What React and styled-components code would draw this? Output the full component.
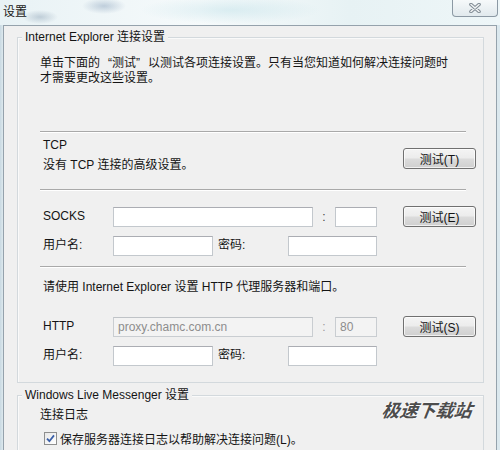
import React from 'react';
import styled, { createGlobalStyle } from 'styled-components';

const Global = createGlobalStyle`
  html, body { margin: 0; padding: 0; background: #e6eff3; }
  body {
    font-family: "Liberation Sans", "Noto Sans CJK SC", sans-serif;
    font-size: 12px;
    color: #141414;
  }
`;

const Window = styled.div`
  width: 500px;
  height: 450px;
  overflow: hidden;
  position: relative;
  display: flex;
  flex-direction: column;
  background: linear-gradient(90deg, #c9d9e2 0px, #dde9ee 3px, #e9f2f5 50%, #dbe8ee 100%);
`;

const TitleBar = styled.div`
  height: 25px;
  flex: none;
  display: flex;
  justify-content: space-between;
  align-items: flex-start;
  background:
    radial-gradient(ellipse 18px 7px at 40px 17px, rgba(110, 135, 160, 0.35), transparent),
    radial-gradient(ellipse 22px 8px at 104px 6px, rgba(100, 130, 165, 0.35), transparent),
    radial-gradient(ellipse 90px 14px at 230px 10px, rgba(170, 215, 225, 0.35), transparent),
    linear-gradient(90deg, #e8f2f5, #f6fafb 40%, #e7f2f4 70%, #eef6f8);
`;

const Title = styled.span`
  padding: 5px 0 0 3px;
  font-size: 12px;
  line-height: 14px;
  color: #202020;
`;

const CloseButton = styled.div`
  width: 44px;
  height: 16px;
  margin-right: 2px;
  border: 1px solid #8c99a4;
  border-top: none;
  border-radius: 0 0 4px 4px;
  background: linear-gradient(#f6f9fa, #e1e9ed);
  display: flex;
  align-items: center;
  justify-content: center;
`;

const Frame = styled.div`
  flex: 1;
  display: flex;
  padding: 0 3px;
`;

const Client = styled.div`
  flex: 1;
  border: 1px solid #95a2ac;
  border-bottom: none;
  background: #f0f0f0;
  padding: 11px 12px 0 13px;
  display: flex;
  flex-direction: column;
`;

const Group = styled.div`
  position: relative;
  border: 1px solid #d3d9dd;
  box-shadow: inset 1px 1px 0 #fafafa;
  margin-top: ${p => p.$mt || 0}px;
  padding: ${p => p.$pad};
  display: flex;
  flex-direction: column;
`;

const Legend = styled.span`
  position: absolute;
  top: -8px;
  left: 4px;
  padding: 0 3px;
  background: #f0f0f0;
  line-height: 15px;
`;

const Text = styled.div`
  line-height: 15px;
  margin-top: ${p => p.$mt || 0}px;
  padding-left: ${p => p.$pl || 0}px;
  white-space: nowrap;
`;

const Description = styled.p`
  margin: 0;
  line-height: 15px;
  white-space: nowrap;
`;

const Quote = styled.span`
  display: inline-block;
  width: 12px;
  text-align: ${p => (p.$open ? 'right' : 'left')};
`;

const Separator = styled.div`
  width: 426px;
  height: 0;
  border-top: 1px solid #a9a9a9;
  border-bottom: 1px solid #ffffff;
  margin-top: ${p => p.$mt}px;
`;

const Section = styled.div`
  display: flex;
  justify-content: space-between;
  align-items: flex-start;
  margin-top: ${p => p.$mt}px;
`;

const Row = styled.div`
  display: flex;
  align-items: center;
  height: 21px;
  padding-left: 3px;
  margin-top: ${p => p.$mt}px;
`;

const Label = styled.span`
  width: ${p => p.$w || 70}px;
  margin-left: ${p => p.$ml || 0}px;
  flex: none;
  line-height: 15px;
`;

const Input = styled.div`
  box-sizing: border-box;
  width: ${p => p.$w}px;
  height: 20px;
  flex: none;
  border: 1px solid ${p => (p.$disabled ? '#c9cdd1' : '#c3c8cd')};
  border-top-color: ${p => (p.$disabled ? '#bfc3c7' : '#abadb3')};
  background: ${p => (p.$disabled ? '#f3f3f3' : '#ffffff')};
  color: #8d8d8d;
  padding-left: 4px;
  line-height: 18px;
  font-size: 12px;
  overflow: hidden;
  white-space: nowrap;
`;

const Colon = styled.span`
  width: 22px;
  flex: none;
  text-align: center;
  color: ${p => (p.$disabled ? '#9a9a9a' : '#444')};
`;

const Button = styled.div`
  box-sizing: border-box;
  width: 73px;
  height: 21px;
  flex: none;
  margin-left: auto;
  margin-top: ${p => p.$mt || 0}px;
  border: 1px solid #707070;
  border-radius: 3px;
  background: linear-gradient(#f4f4f4 0%, #ececec 48%, #dcdcdc 52%, #cfcfcf 100%);
  box-shadow: inset 0 0 0 1px rgba(255, 255, 255, 0.7);
  display: flex;
  align-items: center;
  justify-content: center;
  font-size: 12px;
  color: #141414;
`;

const TcpText = styled.div`
  padding-left: 3px;
  display: flex;
  flex-direction: column;
`;

const CheckRow = styled.div`
  display: flex;
  align-items: center;
  margin-top: 7px;
  padding-left: 4px;
  gap: 3px;
`;

const CheckBox = styled.span`
  box-sizing: border-box;
  width: 13px;
  height: 13px;
  border: 1px solid #8e8f8f;
  background: linear-gradient(135deg, #e8e8e8, #ffffff);
  display: flex;
  align-items: center;
  justify-content: center;
`;

const Watermark = styled.div`
  position: absolute;
  left: 382px;
  top: 396px;
  font-family: "Noto Sans CJK SC", sans-serif;
  font-size: 18px;
  font-weight: 700;
  font-style: italic;
  color: #4d4d4d;
  text-shadow: 0 0 2px #ffffff, 0 0 2px #ffffff;
  transform: skewX(-8deg);
`;

export default function App() {
  return (
    <>
      <Global />
      <Window>
        <TitleBar>
          <Title>设置</Title>
          <CloseButton>
            <svg width="12" height="10" viewBox="0 0 12 10">
              <path d="M2 1.5 L10 8.5 M10 1.5 L2 8.5" stroke="#7f8a93" strokeWidth="3.6" strokeLinecap="round" fill="none" />
              <path d="M2 1.5 L10 8.5 M10 1.5 L2 8.5" stroke="#f2f4f5" strokeWidth="1.6" strokeLinecap="round" fill="none" />
            </svg>
          </CloseButton>
        </TitleBar>
        <Frame>
          <Client>
            <Group $pad="18px 7px 16px 22px">
              <Legend>Internet Explorer 连接设置</Legend>
              <Description>
                单击下面的<Quote $open>“</Quote>测试<Quote>”</Quote>以测试各项连接设置。只有当您知道如何解决连接问题时
                <br />
                才需要更改这些设置。
              </Description>

              <Separator $mt={45} />
              <Section $mt={5}>
                <TcpText>
                  <Text>TCP</Text>
                  <Text $mt={5}>没有 TCP 连接的高级设置。</Text>
                </TcpText>
                <Button $mt={10}>测试(T)</Button>
              </Section>

              <Separator $mt={16} />
              <Row $mt={15}>
                <Label>SOCKS</Label>
                <Input $w={200} />
                <Colon>:</Colon>
                <Input $w={42} />
                <Button>测试(E)</Button>
              </Row>
              <Row $mt={8}>
                <Label>用户名:</Label>
                <Input $w={100} />
                <Label $ml={5}>密码:</Label>
                <Input $w={89} />
              </Row>

              <Separator $mt={10} />
              <Text $mt={12} $pl={3}>请使用 Internet Explorer 设置 HTTP 代理服务器和端口。</Text>
              <Row $mt={21}>
                <Label>HTTP</Label>
                <Input $w={200} $disabled>proxy.chamc.com.cn</Input>
                <Colon $disabled>:</Colon>
                <Input $w={42} $disabled>80</Input>
                <Button>测试(S)</Button>
              </Row>
              <Row $mt={8}>
                <Label>用户名:</Label>
                <Input $w={100} />
                <Label $ml={5}>密码:</Label>
                <Input $w={89} />
              </Row>
            </Group>

            <Group $mt={12} $pad="12px 7px 20px 22px">
              <Legend>Windows Live Messenger 设置</Legend>
              <Text>连接日志</Text>
              <CheckRow>
                <CheckBox>
                  <svg width="9" height="9" viewBox="0 0 9 9">
                    <path d="M1 4.6 L3.4 7.2 L8 1.4" stroke="#3a5fa8" strokeWidth="1.8" fill="none" />
                  </svg>
                </CheckBox>
                <span>保存服务器连接日志以帮助解决连接问题(L)。</span>
              </CheckRow>
            </Group>
          </Client>
        </Frame>
        <Watermark>极速下载站</Watermark>
      </Window>
    </>
  );
}
